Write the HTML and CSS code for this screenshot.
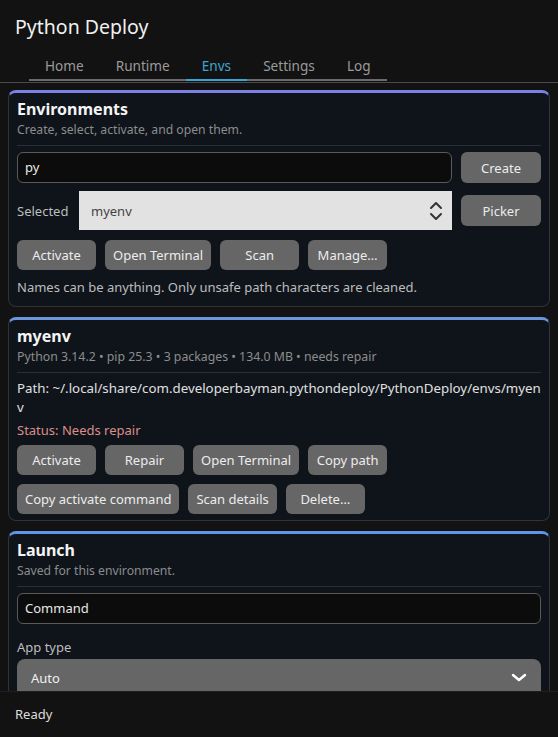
FILE: index.html
```html
<!DOCTYPE html>
<html>
<head>
<meta charset="utf-8">
<link rel="stylesheet" href="styles.css">
</head>
<body>
<div class="app">
  <header class="header">
    <div class="title">Python Deploy</div>
    <nav class="tabs">
      <span class="tab">Home</span>
      <span class="tab">Runtime</span>
      <span class="tab active">Envs</span>
      <span class="tab">Settings</span>
      <span class="tab">Log</span>
    </nav>
  </header>
  <main class="main">
    <section class="card card-a">
      <h2 class="card-title">Environments</h2>
      <div class="card-sub">Create, select, activate, and open them.</div>
      <div class="sep"></div>
      <div class="row">
        <div class="input grow">py</div>
        <button class="btn side">Create</button>
      </div>
      <div class="row sel-row">
        <span class="label">Selected</span>
        <div class="select grow">
          <span>myenv</span>
          <svg class="updown" width="14" height="22" viewBox="0 0 14 22"><path d="M2 8 L7 3 L12 8 M2 14 L7 19 L12 14" fill="none" stroke="#333" stroke-width="2" stroke-linecap="round" stroke-linejoin="round"/></svg>
        </div>
        <button class="btn side">Picker</button>
      </div>
      <div class="btns">
        <button class="btn">Activate</button>
        <button class="btn">Open Terminal</button>
        <button class="btn">Scan</button>
        <button class="btn">Manage…</button>
      </div>
      <div class="note">Names can be anything. Only unsafe path characters are cleaned.</div>
    </section>

    <section class="card card-b">
      <h2 class="card-title">myenv</h2>
      <div class="card-sub">Python 3.14.2 • pip 25.3 • 3 packages • 134.0 MB • needs repair</div>
      <div class="sep"></div>
      <div class="path">Path: ~/.local/share/com.developerbayman.pythondeploy/PythonDeploy/envs/myenv</div>
      <div class="status">Status: Needs repair</div>
      <div class="btns first">
        <button class="btn">Activate</button>
        <button class="btn">Repair</button>
        <button class="btn">Open Terminal</button>
        <button class="btn">Copy path</button>
      </div>
      <div class="btns">
        <button class="btn">Copy activate command</button>
        <button class="btn">Scan details</button>
        <button class="btn">Delete…</button>
      </div>
    </section>

    <section class="card card-c">
      <h2 class="card-title">Launch</h2>
      <div class="card-sub">Saved for this environment.</div>
      <div class="sep"></div>
      <div class="input">Command</div>
      <div class="field-label">App type</div>
      <div class="dropdown">
        <span>Auto</span>
        <svg width="16" height="10" viewBox="0 0 16 10"><path d="M2 2 L8 7 L14 2" fill="none" stroke="#fff" stroke-width="2.5" stroke-linecap="round" stroke-linejoin="round"/></svg>
      </div>
    </section>
  </main>
  <footer class="statusbar">Ready</footer>
</div>
</body>
</html>
```
FILE: styles.css
```css
* { box-sizing: border-box; }
html, body { margin: 0; padding: 0; background: #121212; }
body {
  font-family: "Noto Sans", "DejaVu Sans", sans-serif;
  color: #e6e6e6;
  font-size: 13px;
}
.app {
  width: 558px;
  height: 737px;
  display: flex;
  flex-direction: column;
  overflow: hidden;
}
.header {
  flex: none;
  border-bottom: 1px solid #4a4a4a;
}
.title {
  font-size: 19.5px;
  color: #f0f0f0;
  padding: 13px 15px 0;
  height: 52px;
}
.tabs {
  display: flex;
  margin-left: 29px;
  padding-bottom: 1px;
}
.tab {
  font-size: 13.6px;
  padding: 0 16px;
  height: 29px;
  line-height: 27px;
  color: #9a9a9a;
  border-bottom: 2px solid #6b6b6b;
}
.tab.active {
  color: #3da5cf;
  border-bottom-color: #34a6d8;
}
.main {
  flex: 1;
  overflow: hidden;
  padding: 7px 8px;
  display: flex;
  flex-direction: column;
  gap: 10px;
}
.card {
  flex: none;
  background: #0f141b;
  border: 1px solid #30343a;
  border-top: 3px solid #7c80e2;
  border-radius: 8px;
  padding: 5px 8px 9px;
}
.card-a { padding-bottom: 10px; }
.card-b { border-top-color: #6b96dd; padding-bottom: 6px; }
.card-c { border-top-color: #5f95e6; }
.card-title {
  margin: 0;
  font-size: 16px;
  font-weight: bold;
  color: #f4f4f4;
  line-height: 22px;
}
.card-sub {
  font-size: 12.2px;
  color: #8c8c8c;
  line-height: 16px;
  margin-top: 2px;
}
.card-b .card-sub { font-size: 12.3px; }
.sep {
  height: 1px;
  background: #2a2f36;
  margin: 7px 0 6px;
}
.row {
  display: flex;
  align-items: center;
  gap: 9px;
}
.grow { flex: 1; }
.input {
  height: 31px;
  border: 1px solid #5a5a5a;
  border-radius: 6px;
  background: #0c0c0c;
  padding: 0 7px;
  line-height: 29px;
  color: #e8e8e8;
}
.btn {
  font-family: inherit;
  font-size: 13px;
  color: #ececec;
  background: #666666;
  border: none;
  border-radius: 6px;
  height: 30px;
  min-width: 79px;
  padding: 0 8px;
}
.btn.side { width: 80px; height: 31px; }
.sel-row { margin-top: 8px; }
.label { color: #bdbdbd; width: 53px; }
.select {
  height: 39px;
  background: #e2e2e2;
  color: #444;
  display: flex;
  align-items: center;
  justify-content: space-between;
  padding: 0 12px;
}
.updown { margin-right: -3px; }
.btns {
  display: flex;
  gap: 9px;
  margin-top: 10px;
}
.card-b .btns { margin-top: 9px; }
.card-b .btns.first { margin-top: 5px; }
.note {
  margin-top: 8px;
  color: #bdbdbd;
}
.path { font-size: 13.3px; color: #e0e0e0; line-height: 19px; word-break: break-all; margin-top: 4px; }
.status { color: #dc8f8a; margin-top: 4px; line-height: 19px; }
.field-label { color: #bdbdbd; margin-top: 14px; }
.dropdown {
  margin-top: 3px;
  height: 38px;
  background: #666666;
  border-radius: 8px 8px 0 0;
  display: flex;
  align-items: center;
  justify-content: space-between;
  padding: 0 14px 0 14px;
  color: #f0f0f0;
}
.statusbar {
  flex: none;
  height: 46px;
  background: #121212;
  border-top: 1px solid #1e1e1e;
  padding: 13px 15px;
  color: #dddddd;
}
```
